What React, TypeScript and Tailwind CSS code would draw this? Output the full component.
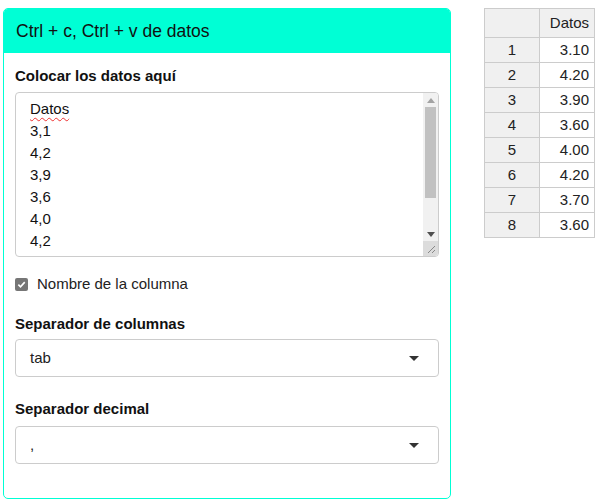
const rows = ["3.10", "4.20", "3.90", "3.60", "4.00", "4.20", "3.70", "3.60"];
const pasted = ["3,1", "4,2", "3,9", "3,6", "4,0", "4,2"];

function Caret() {
  return (
    <svg width="12" height="7" viewBox="0 0 12 7" className="shrink-0">
      <path d="M1 1h10L6 6z" fill="#333" />
    </svg>
  );
}

function SelectBox({ value }: { value: string }) {
  return (
    <div className="flex h-[38px] items-center justify-between rounded-[4px] border border-[#ccc] bg-white pl-[14px] pr-[18px] text-[15px] text-[#222]">
      <span>{value}</span>
      <Caret />
    </div>
  );
}

// fake classic scrollbar + resize grip
function ScrollBar() {
  return (
    <div className="flex w-[15px] flex-col bg-[#f1f1f1]">
      <div className="flex h-[14px] items-center justify-center">
        <svg width="8" height="5" viewBox="0 0 8 5"><path d="M0 5L4 0l4 5z" fill="#a3a3a3" /></svg>
      </div>
      <div className="mx-[2px] h-[91px] bg-[#c1c1c1]" />
      <div className="flex-1" />
      <div className="flex h-[14px] items-center justify-center">
        <svg width="8" height="5" viewBox="0 0 8 5"><path d="M0 0h8L4 5z" fill="#505050" /></svg>
      </div>
      <div className="flex h-[15px] items-end justify-end bg-[#dcdcdc] p-[2px]">
        <svg width="9" height="9" viewBox="0 0 9 9">
          <path d="M8 1L1 8M8 5L5 8" stroke="#888" strokeWidth="1" />
        </svg>
      </div>
    </div>
  );
}

export default function App() {
  return (
    <div className="flex items-start gap-[33px] pl-[3px] pt-[8px] font-['Liberation_Sans',Arial,sans-serif] text-[#222]">
      <div className="w-[448px] h-[491px] rounded-[5px] border border-[#00ffd5] overflow-hidden">
        <div className="h-[44px] bg-[#00ffd5] flex items-center px-[12px] text-[17.5px] text-[#111]">
          Ctrl + c, Ctrl + v de datos
        </div>
        <div className="px-[11px] pt-[13px] flex flex-col">
          <label className="text-[15px] font-bold text-[#111] leading-[20px]">Colocar los datos aquí</label>
          <div className="mt-[6px] flex h-[165px] overflow-hidden rounded-[4px] border border-[#ccc]">
            <div className="flex-1 pl-[14px] pt-[5px] text-[15px] leading-[22px] text-[#111]">
              <div className="underline decoration-wavy decoration-[#e33] decoration-1 underline-offset-[3px]">Datos</div>
              {pasted.map((p, i) => (
                <div key={i}>{p}</div>
              ))}
            </div>
            <ScrollBar />
          </div>
          <div className="mt-[17px] flex items-center gap-[9px] text-[15px] leading-[20px]">
            <span className="flex h-[13px] w-[13px] items-center justify-center rounded-[2px] bg-[#767676]">
              <svg width="9" height="9" viewBox="0 0 10 10">
                <path d="M1.5 5.2l2.4 2.4L8.6 2.4" stroke="#fff" strokeWidth="1.8" fill="none" />
              </svg>
            </span>
            <span>Nombre de la columna</span>
          </div>
          <label className="mt-[20px] text-[15px] font-bold text-[#111] leading-[20px]">Separador de columnas</label>
          <div className="mt-[5px]">
            <SelectBox value="tab" />
          </div>
          <label className="mt-[22px] text-[15px] font-bold text-[#111] leading-[20px]">Separador decimal</label>
          <div className="mt-[7px]">
            <SelectBox value="," />
          </div>
        </div>
      </div>

      <table className="border-collapse text-[15px] text-[#222]">
        <thead>
          <tr className="h-[29px]">
            <th className="w-[55px] border border-[#ccc] bg-[#f0f0f0] font-normal"></th>
            <th className="w-[55px] border border-[#ccc] bg-[#f0f0f0] font-normal text-right pr-[5px]">Datos</th>
          </tr>
        </thead>
        <tbody>
          {rows.map((v, i) => (
            <tr key={i} className="h-[25px]">
              <td className="border border-[#ccc] bg-[#f0f0f0] text-center">{i + 1}</td>
              <td className="border border-[#ccc] bg-white text-right pr-[5px]">{v}</td>
            </tr>
          ))}
        </tbody>
      </table>
    </div>
  );
}
